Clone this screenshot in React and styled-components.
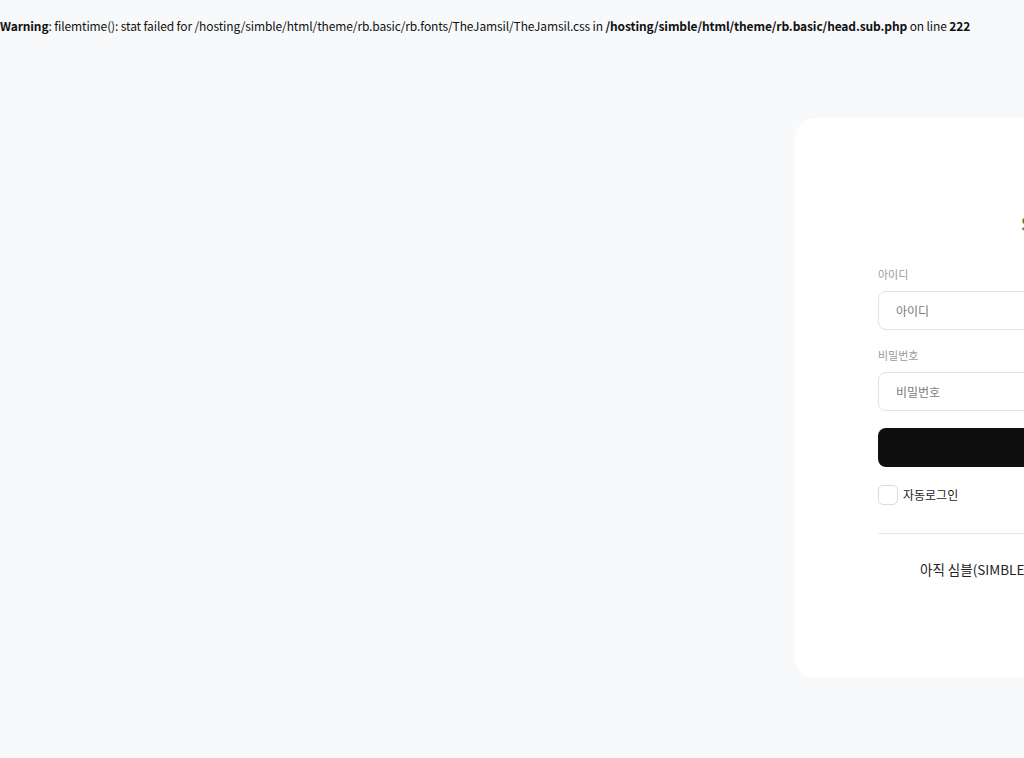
import React from "react";
import styled, { createGlobalStyle } from "styled-components";

const Global = createGlobalStyle`
  html, body { margin: 0; padding: 0; }
  body {
    background: #f8f9fb;
    font-family: "Noto Sans CJK KR", "Noto Sans", sans-serif;
    overflow: hidden;
    width: 1024px;
    height: 758px;
  }
`;

const Warning = styled.div`
  font-size: 12px;
  line-height: 18px;
  letter-spacing: -0.12px;
  color: #111;
  padding-top: 17px;
  white-space: nowrap;
  b { font-weight: 700; }
`;

const Main = styled.div`
  display: flex;
  padding-top: 83px;
  width: 2000px;
`;

const Card = styled.div`
  margin-left: 795px;
  width: 460px;
  height: 560px;
  flex-shrink: 0;
  background: #fff;
  border-radius: 20px;
  box-sizing: border-box;
  padding: 93px 83px 0;
  display: flex;
  flex-direction: column;
`;

const Title = styled.div`
  font-size: 18px;
  line-height: 24px;
  color: #3e8a4a;
  font-weight: 700;
  padding-left: 143px;
  white-space: nowrap;
  margin-bottom: 31px;
`;

const Label = styled.label`
  font-size: 11px;
  line-height: 16px;
  color: #9a9a9a;
  margin-bottom: 9px;
`;

const Input = styled.input`
  height: 39px;
  box-sizing: border-box;
  border: 1px solid #e3e3e3;
  border-radius: 8px;
  padding: 0 17px;
  font-size: 12px;
  font-family: "Noto Sans CJK KR", sans-serif;
  outline: none;
  margin-bottom: ${p => p.$mb || 0}px;
  &::placeholder { color: #7a7a7a; }
`;

const Submit = styled.button`
  height: 39px;
  border: none;
  border-radius: 8px;
  background: #0f0f0f;
  margin-top: 17px;
`;

const CheckRow = styled.label`
  display: flex;
  align-items: center;
  gap: 5px;
  margin-top: 18px;
  font-size: 12px;
  line-height: 20px;
  color: #222;
`;

const Box = styled.span`
  width: 20px;
  height: 20px;
  border: 1px solid #dcdcdc;
  border-radius: 5px;
  box-sizing: border-box;
  background: #fff;
`;

const Divider = styled.hr`
  border: none;
  border-top: 1px solid #e6e6e6;
  margin: 28px 0 0;
`;

const Join = styled.div`
  margin-top: 26px;
  padding-left: 42px;
  font-size: 13.5px;
  line-height: 18px;
  color: #222;
  white-space: nowrap;
`;

export default function App() {
  return (
    <>
      <Global />
      <Warning>
        <b>Warning</b>: filemtime(): stat failed for /hosting/simble/html/theme/rb.basic/rb.fonts/TheJamsil/TheJamsil.css in <b>/hosting/simble/html/theme/rb.basic/head.sub.php</b> on line <b>222</b>
      </Warning>
      <Main>
        <Card>
          <Title>SIMBLE 로그인</Title>
          <Label>아이디</Label>
          <Input placeholder="아이디" $mb={17} />
          <Label>비밀번호</Label>
          <Input type="password" placeholder="비밀번호" />
          <Submit />
          <CheckRow><Box />자동로그인</CheckRow>
          <Divider />
          <Join>아직 심블(SIMBLE) 회원이 아니신가요? 회원가입</Join>
        </Card>
      </Main>
    </>
  );
}
